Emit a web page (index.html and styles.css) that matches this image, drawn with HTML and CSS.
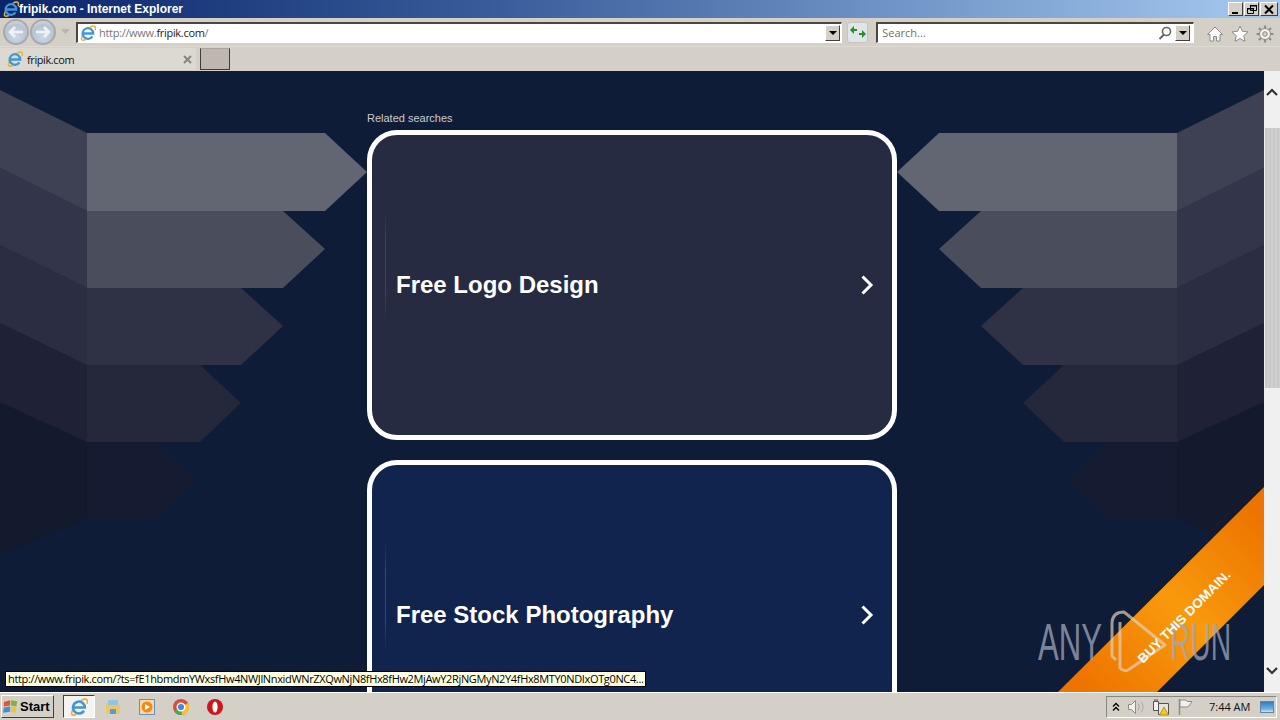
FILE: index.html
```html
<!DOCTYPE html>
<html lang="en">
<head>
    <meta charset="UTF-8">
    <title>fripik.com - Internet Explorer</title>
    <link rel="stylesheet" href="styles.css">
</head>
<body>
    <svg class="defs" width="0" height="0">
        <symbol id="ie" viewBox="0 0 16 16">
            <path d="M2.700 10C.2 14.500 1.500 16.300 5.800 14.500M10 2.200C13.500.2 16.500.6 15.200 5.200" fill="none" stroke="#e9b23a" stroke-width="1.500"/>
            <path d="M12.400 11.300A5.300 5.300 0 1 1 13.200 8.500H3.500" fill="none" stroke="#3f96d8" stroke-width="2.300"/>
        </symbol>
    </svg>

    <header class="titlebar">
        <svg class="icon-16"><use href="#ie"/></svg>
        <span class="title">fripik.com - Internet Explorer</span>
        <div class="win-btns">
            <span class="win-btn"><svg width="14" height="13"><rect x="3" y="9" width="6" height="2" fill="#000"/></svg></span>
            <span class="win-btn"><svg width="14" height="13"><path d="M5.500 2.500h6v5h-6zM2.500 5.500h6v5h-6z" fill="#d4d0c8" stroke="#000"/><path d="M5 2h7v1.500H5zM2 5h7v1.500H2z"/></svg></span>
            <span class="win-btn win-close"><svg width="16" height="13"><path d="M4 2.500l8 8M12 2.500l-8 8" stroke="#000" stroke-width="2"/></svg></span>
        </div>
    </header>

    <div class="toolbar">
        <div class="nav-btns">
            <span class="round-btn"><svg width="18" height="14"><path d="M8 2L3 7l5 5M3 7h13" fill="none" stroke="#eef3f8" stroke-width="2.600"/></svg></span>
            <span class="round-btn"><svg width="18" height="14"><path d="M10 2l5 5-5 5M15 7H2" fill="none" stroke="#eef3f8" stroke-width="2.600"/></svg></span>
            <svg class="nav-drop" width="10" height="6"><path d="M0 0h9L4.500 5z" fill="#b8b4ae"/></svg>
        </div>
        <div class="field address">
            <svg class="icon-16"><use href="#ie"/></svg>
            <span class="url"><span class="url-dim">http://www.</span>fripik.com<span class="url-dim">/</span></span>
            <span class="drop"><i></i></span>
        </div>
        <span class="go-btn">
            <svg width="18" height="14"><path d="M1 5l4-4v3h3v2H5v3zM17 9l-4 4v-3h-3V8h3V5z" fill="#2f8a2c"/></svg>
        </span>
        <div class="field search">
            <span class="search-text">Search...</span>
            <svg class="lens" width="14" height="14"><circle cx="8.500" cy="5.500" r="4" fill="none" stroke="#666" stroke-width="1.600"/><path d="M6 8.500l-4.500 4.500" stroke="#666" stroke-width="2"/></svg>
            <span class="drop"><i></i></span>
        </div>
        <div class="tools">
            <svg width="18" height="18" viewBox="0 0 18 18"><path d="M9 2L1.500 9.500H4V16h3.500v-4.500h3V16H14V9.500h2.500z" fill="#fff" stroke="#8e8c86"/></svg>
            <svg width="18" height="18" viewBox="0 0 18 18"><path d="M9 1l2.400 5.300 5.600.6-4.200 3.800 1.200 5.700L9 13.500l-5 2.900 1.200-5.700L1 6.900l5.600-.6z" fill="#fff" stroke="#8e8c86"/></svg>
            <svg width="18" height="18" viewBox="0 0 18 18"><circle cx="9" cy="9" r="5.500" fill="#f4f3f0" stroke="#8e8c86" stroke-width="1"/><circle cx="9" cy="9" r="2.300" fill="#d4d0c8" stroke="#8e8c86"/><path d="M9 .5v3M9 14.500v3M.5 9h3M14.500 9h3M3 3l2 2M13 13l2 2M15 3l-2 2M5 13l-2 2" stroke="#8e8c86" stroke-width="2.200"/></svg>
        </div>
    </div>

    <div class="tabrow">
        <div class="tab">
            <svg class="icon-16"><use href="#ie"/></svg>
            <span class="tab-name">fripik.com</span>
            <svg class="tab-close" width="9" height="9"><path d="M1 1l7 7M8 1L1 8" stroke="#88857f" stroke-width="2"/></svg>
        </div>
        <div class="newtab"></div>
    </div>

    <div class="viewport">
        <main class="page">
            <svg class="art" viewBox="0 71 1264 621">
                <g id="wing">
                    <path d="M0 402L87 442V519L0 555z" fill="#141a2d"/>
                    <path d="M87 442H157L198 481L157 519H87z" fill="#151b30"/>
                    <path d="M0 323L87 365V442L0 402z" fill="#1f2236"/>
                    <path d="M87 365H200L241 403L200 442H87z" fill="#25283a"/>
                    <path d="M0 245L87 288V365L0 323z" fill="#2b2e42"/>
                    <path d="M87 288H241L283 326L241 365H87z" fill="#2f3245"/>
                    <path d="M0 168L87 211V288L0 245z" fill="#33364a"/>
                    <path d="M87 211H283L325 249L283 288H87z" fill="#4a4d5b"/>
                    <path d="M0 90L87 133V211L0 168z" fill="#3e4154"/>
                    <path d="M87 133H325L367 172L325 211H87z" fill="#626673"/>
                </g>
                <use href="#wing" transform="matrix(-1 0 0 1 1264 0)"/>
            </svg>

            <div class="content">
                <p class="label">Related searches</p>
                <a class="card card-logo">
                    <span class="card-text">Free Logo Design</span>
                    <svg class="chevron" width="14" height="20"><path d="M2.500 1.500L11 10l-8.500 8.500" fill="none" stroke="#fff" stroke-width="3"/></svg>
                </a>
                <a class="card card-stock">
                    <span class="card-text">Free Stock Photography</span>
                    <svg class="chevron" width="14" height="20"><path d="M2.500 1.500L11 10l-8.500 8.500" fill="none" stroke="#fff" stroke-width="3"/></svg>
                </a>
            </div>

            <svg class="overlay" viewBox="0 71 1264 621">
                <defs>
                    <linearGradient id="band" gradientUnits="userSpaceOnUse" x1="1085" y1="685" x2="1255" y2="515">
                        <stop offset="0" stop-color="#ee7400"/>
                        <stop offset="0.5" stop-color="#f89a0c"/>
                        <stop offset="1" stop-color="#ee7400"/>
                    </linearGradient>
                </defs>
                <path d="M1264 487V585L1157 692H1058z" fill="url(#band)"/>
                <g class="mark">
                    <text transform="translate(1038 660) scale(.61 1)">ANY</text>
                    <text transform="translate(1170 660) scale(.553 1)">RUN</text>
                </g>
                <path class="play" d="M1116 660L1112 656V622M1112 622Q1113 612 1124 612L1165 645L1128 670Q1124 672 1120 668V622"/>
                <text class="buy" transform="translate(1143 664) rotate(-45)" textLength="125" lengthAdjust="spacingAndGlyphs">BUY THIS DOMAIN.</text>
            </svg>

            <div class="tooltip">http://www.fripik.com/?ts=fE1hbmdmYWxsfHw4NWJlNnxidWNrZXQwNjN8fHx8fHw2MjAwY2RjNGMyN2Y4fHx8MTY0NDIxOTg0NC4...</div>
        </main>

        <aside class="scrollbar">
            <svg class="arrow" width="14" height="10"><path d="M2 8l5-5 5 5" fill="none" stroke="#333" stroke-width="2.200"/></svg>
            <div class="thumb"></div>
            <svg class="arrow arrow-down" width="14" height="10"><path d="M2 2l5 5 5-5" fill="none" stroke="#333" stroke-width="2.200"/></svg>
        </aside>
    </div>

    <footer class="taskbar">
        <div class="start">
            <svg width="16" height="15" viewBox="0 0 18 16">
                <path d="M1 3l7-2v6l-7 1z" fill="#e0562a"/><path d="M9 1l7 1-1 6-6-1z" fill="#7db53a"/>
                <path d="M1 9l7-1v6l-8 1z" fill="#3f8fd8"/><path d="M9 8l6 1-1 6-5-1z" fill="#f2c230"/>
            </svg>
            <span>Start</span>
        </div>
        <div class="task-icons">
            <span class="task-btn active"><svg class="icon-18"><use href="#ie"/></svg></span>
            <span class="task-btn"><svg width="18" height="18" viewBox="0 0 18 18"><path d="M2 5h5l1 2h8v9H2z" fill="#e8c868"/><path d="M4 2h10v5H4z" fill="#8fc4e4"/><path d="M6 11h6v5H6z" fill="#5d9cc4"/></svg></span>
            <span class="task-btn"><svg width="18" height="18" viewBox="0 0 18 18"><rect x="1.500" y="1.500" width="15" height="15" fill="#f3d9a8" stroke="#6b8fc0"/><circle cx="9" cy="9" r="5.500" fill="#f08a18"/><path d="M7 6l5 3-5 3z" fill="#fff"/></svg></span>
            <span class="task-btn"><svg width="18" height="18" viewBox="0 0 18 18"><circle cx="9" cy="9" r="8" fill="#e04a3a"/><path d="M9 9L2 13a8 8 0 0 0 8 4z" fill="#4aa850"/><path d="M9 9l1 8a8 8 0 0 0 6-12z" fill="#f4c430"/><circle cx="9" cy="9" r="3.800" fill="#4a88d8" stroke="#fff" stroke-width="1.400"/></svg></span>
            <span class="task-btn"><svg width="18" height="18" viewBox="0 0 18 18"><circle cx="9" cy="9" r="8" fill="#d0141c"/><ellipse cx="9" cy="9" rx="2.600" ry="5.600" fill="#fff"/></svg></span>
        </div>
        <div class="tray">
            <svg width="8" height="10"><path d="M1 4.500l3-3 3 3M1 8.500l3-3 3 3" fill="none" stroke="#000" stroke-width="1.300"/></svg>
            <svg width="18" height="16" viewBox="0 0 18 16"><path d="M1.500 5.500h3l4-4v13l-4-4h-3z" fill="#f2f1ee" stroke="#8e8c86"/><path d="M11 4.500c1.500 2 1.500 5 0 7M14 2.500c2.500 3 2.500 8 0 11" fill="none" stroke="#a8a6a0"/></svg>
            <svg width="18" height="18" viewBox="0 0 18 18"><path d="M1.500 3.500h5v9h-5zM3 1v2.500M5 1v2.500" fill="#f2f1ee" stroke="#55534e"/><path d="M6.500 5.500h10v11h-10z" fill="#e6e3dc" stroke="#55534e"/><path d="M12 9l4.500 8h-9z" fill="#f4c81e" stroke="#8a6d10" stroke-width=".6"/></svg>
            <svg width="16" height="18" viewBox="0 0 16 18"><path d="M2.500 1v16" stroke="#8e8c86" stroke-width="1.500"/><path d="M3 2h6l1 1.500h5L12 8l-2 1H3z" fill="#f2f1ee" stroke="#8e8c86"/></svg>
            <span class="clock">7:44 AM</span>
            <span class="show-desktop"></span>
        </div>
    </footer>
</body>
</html>
```

FILE: styles.css
```css
* {
    box-sizing: border-box;
}
html, body {
    margin: 0;
    height: 100%;
    overflow: hidden;
}
body {
    display: flex;
    flex-direction: column;
    height: 720px;
    font-family: "Open Sans", "Liberation Sans", sans-serif;
    background: #d4d0c8;
}
.defs {
    position: absolute;
}
.icon-16 {
    width: 16px;
    height: 16px;
    flex: none;
}
.icon-18 {
    width: 18px;
    height: 18px;
}

/* title bar */
.titlebar {
    height: 18px;
    display: flex;
    align-items: center;
    padding-left: 3px;
    background: linear-gradient(90deg, #0a246a 0%, #3a5f9c 40%, #a6caf0 100%);
}
.title {
    color: #fff;
    font-family: "Liberation Sans", sans-serif;
    font-weight: bold;
    font-size: 12px;
}
.win-btns {
    margin-left: auto;
    margin-right: 2px;
    display: flex;
    gap: 1px;
}
.win-btn {
    width: 15px;
    height: 14px;
    display: flex;
    background: #d4d0c8;
    border: 1px solid;
    border-color: #fff #404040 #404040 #fff;
}
.win-close {
    width: 18px;
}

/* address row */
.toolbar {
    height: 28px;
    display: flex;
    align-items: center;
    padding: 0 6px 0 3px;
}
.nav-btns {
    width: 73px;
    display: flex;
    align-items: center;
    gap: 1px;
}
.round-btn {
    width: 26px;
    height: 26px;
    display: flex;
    align-items: center;
    justify-content: center;
    border-radius: 50%;
    border: 2px solid #a9a9a9;
    background: radial-gradient(circle at 50% 70%, #c9d8e6, #b6c4d0 60%, #e2e5e8);
}
.nav-drop {
    margin-left: 4px;
}
.field {
    height: 21px;
    display: flex;
    align-items: center;
    background: #fff;
    border: 1px solid;
    border-color: #4a473f #fff #fff #4a473f;
    border-width: 2px 1px 1px 2px;
    font-size: 11px;
}
.address {
    width: 767px;
    padding-left: 2px;
}
.url {
    margin-left: 3px;
    color: #222;
    letter-spacing: -0.3px;
}
.url-dim {
    color: #777;
}
.drop {
    margin-left: auto;
    width: 15px;
    height: 16px;
    display: flex;
    align-items: center;
    justify-content: center;
    background: #d4d0c8;
    border: 1px solid;
    border-color: #fff #404040 #404040 #fff;
}
.drop i {
    border: 4px solid transparent;
    border-top: 4px solid #000;
    border-bottom: 0;
}
.address .drop {
    margin-right: 1px;
}
.go-btn {
    width: 21px;
    height: 21px;
    margin: 0 8px 0 5px;
    display: flex;
    align-items: center;
    justify-content: center;
    background: #dfe6ea;
    border: 1px solid #c4c4c0;
    border-radius: 3px;
}
.search {
    width: 318px;
    padding-left: 4px;
}
.search-text {
    color: #6f6f6f;
}
.lens {
    margin-left: auto;
    margin-right: 1px;
}
.search .drop {
    margin-left: 2px;
    margin-right: 3px;
}
.tools {
    margin-left: 12px;
    display: flex;
    gap: 7px;
    padding-top: 3px;
}

/* tabs */
.tabrow {
    height: 25px;
    display: flex;
    align-items: flex-end;
    gap: 4px;
    padding-bottom: 1px;
    border-top: 1px solid #dedad3;
}
.tab {
    width: 196px;
    height: 22px;
    display: flex;
    align-items: center;
    padding: 0 4px 0 7px;
    background: #dcd9d2;
    font-size: 11px;
    color: #111;
}
.tab-name {
    margin-left: 4px;
    letter-spacing: -0.4px;
}
.tab-close {
    margin-left: auto;
}
.newtab {
    width: 30px;
    height: 22px;
    background: #bdb7b0;
    border: 1px solid #3f3d38;
    border-top: 1px solid #a8a49c;
}

/* page area */
.viewport {
    height: 621px;
    display: flex;
}
.page {
    position: relative;
    flex: 1;
    overflow: hidden;
    background: #0e1c38;
}
.art, .overlay {
    position: absolute;
    left: 0;
    top: 0;
    width: 1264px;
    height: 621px;
}
.content {
    position: relative;
    width: 530px;
    margin: 0 auto;
    padding-top: 40px;
    font-family: "Liberation Sans", Arial, sans-serif;
}
.label {
    margin: 0 0 5px;
    font-size: 11px;
    line-height: 14px;
    color: #ccc;
}
.card {
    position: relative;
    height: 310px;
    margin-bottom: 20px;
    display: flex;
    align-items: center;
    justify-content: space-between;
    padding: 0 18px 0 24px;
    border: 5px solid #fff;
    border-radius: 30px;
}
.card::before {
    content: "";
    position: absolute;
    left: 13px;
    top: 75px;
    width: 1px;
    height: 110px;
    background: linear-gradient(180deg, transparent, #2c4a82 30%, #2c4a82 70%, transparent);
}
.card-logo {
    background: #272b41;
}
.card-stock {
    background: #10244d;
}
.card-text {
    color: #fff;
    font-size: 24px;
    font-weight: bold;
}

/* ribbon and watermark */
.buy {
    fill: #fff;
    font-family: "Liberation Sans", sans-serif;
    font-weight: bold;
    font-size: 13px;
}
.mark text {
    fill: #a0a6b8;
    font-family: "Liberation Sans", sans-serif;
    font-size: 51px;
    opacity: 0.75;
}
.play {
    fill: none;
    stroke: #e0d0b8;
    stroke-width: 3;
    stroke-linejoin: round;
    opacity: 0.7;
}
.tooltip {
    position: absolute;
    left: 5px;
    top: 600px;
    height: 16px;
    padding: 0 2px;
    background: #ffffe1;
    border: 1px solid #000;
    font-size: 11px;
    line-height: 14px;
    letter-spacing: -0.35px;
    white-space: nowrap;
    color: #000;
}

/* scrollbar */
.scrollbar {
    width: 16px;
    position: relative;
    display: flex;
    flex-direction: column;
    align-items: center;
    background: #f0f0f0;
}
.arrow {
    margin-top: 16px;
}
.thumb {
    width: 15px;
    height: 260px;
    margin-top: 31px;
    background: repeating-linear-gradient(90deg, #c8c8c8 0 2px, #d0d0d0 2px 4px);
}
.arrow-down {
    margin-top: auto;
    margin-bottom: 16px;
}

/* taskbar */
.taskbar {
    height: 28px;
    display: flex;
    align-items: center;
    border-top: 1px solid #fff;
    padding: 0 3px 0 1px;
}
.start {
    width: 53px;
    height: 23px;
    display: flex;
    align-items: center;
    gap: 1px;
    padding-left: 1px;
    background: #d4d0c8;
    border: 1px solid;
    border-color: #fff #404040 #404040 #fff;
    font-family: "Liberation Sans", sans-serif;
    font-weight: bold;
    font-size: 13px;
}
.task-icons {
    margin-left: 9px;
    display: flex;
    gap: 2px;
}
.task-btn {
    width: 32px;
    height: 23px;
    display: flex;
    align-items: center;
    justify-content: center;
}
.task-btn.active {
    background: #f4f3ef;
    border: 1px solid;
    border-color: #404040 #fff #fff #404040;
}
.tray {
    margin-left: auto;
    width: 171px;
    height: 22px;
    display: flex;
    align-items: center;
    padding: 0 2px 0 5px;
    gap: 7px;
    border: 1px solid;
    border-color: #8a877f #fff #fff #8a877f;
}
.clock {
    margin-left: 9px;
    font-size: 11px;
    color: #111;
}
.show-desktop {
    width: 14px;
    height: 12px;
    margin-left: auto;
    background: linear-gradient(180deg, #2f7fc4, #6fb0e0 70%, #d8dfe6);
    border: 1px solid #5f86a8;
}
```
